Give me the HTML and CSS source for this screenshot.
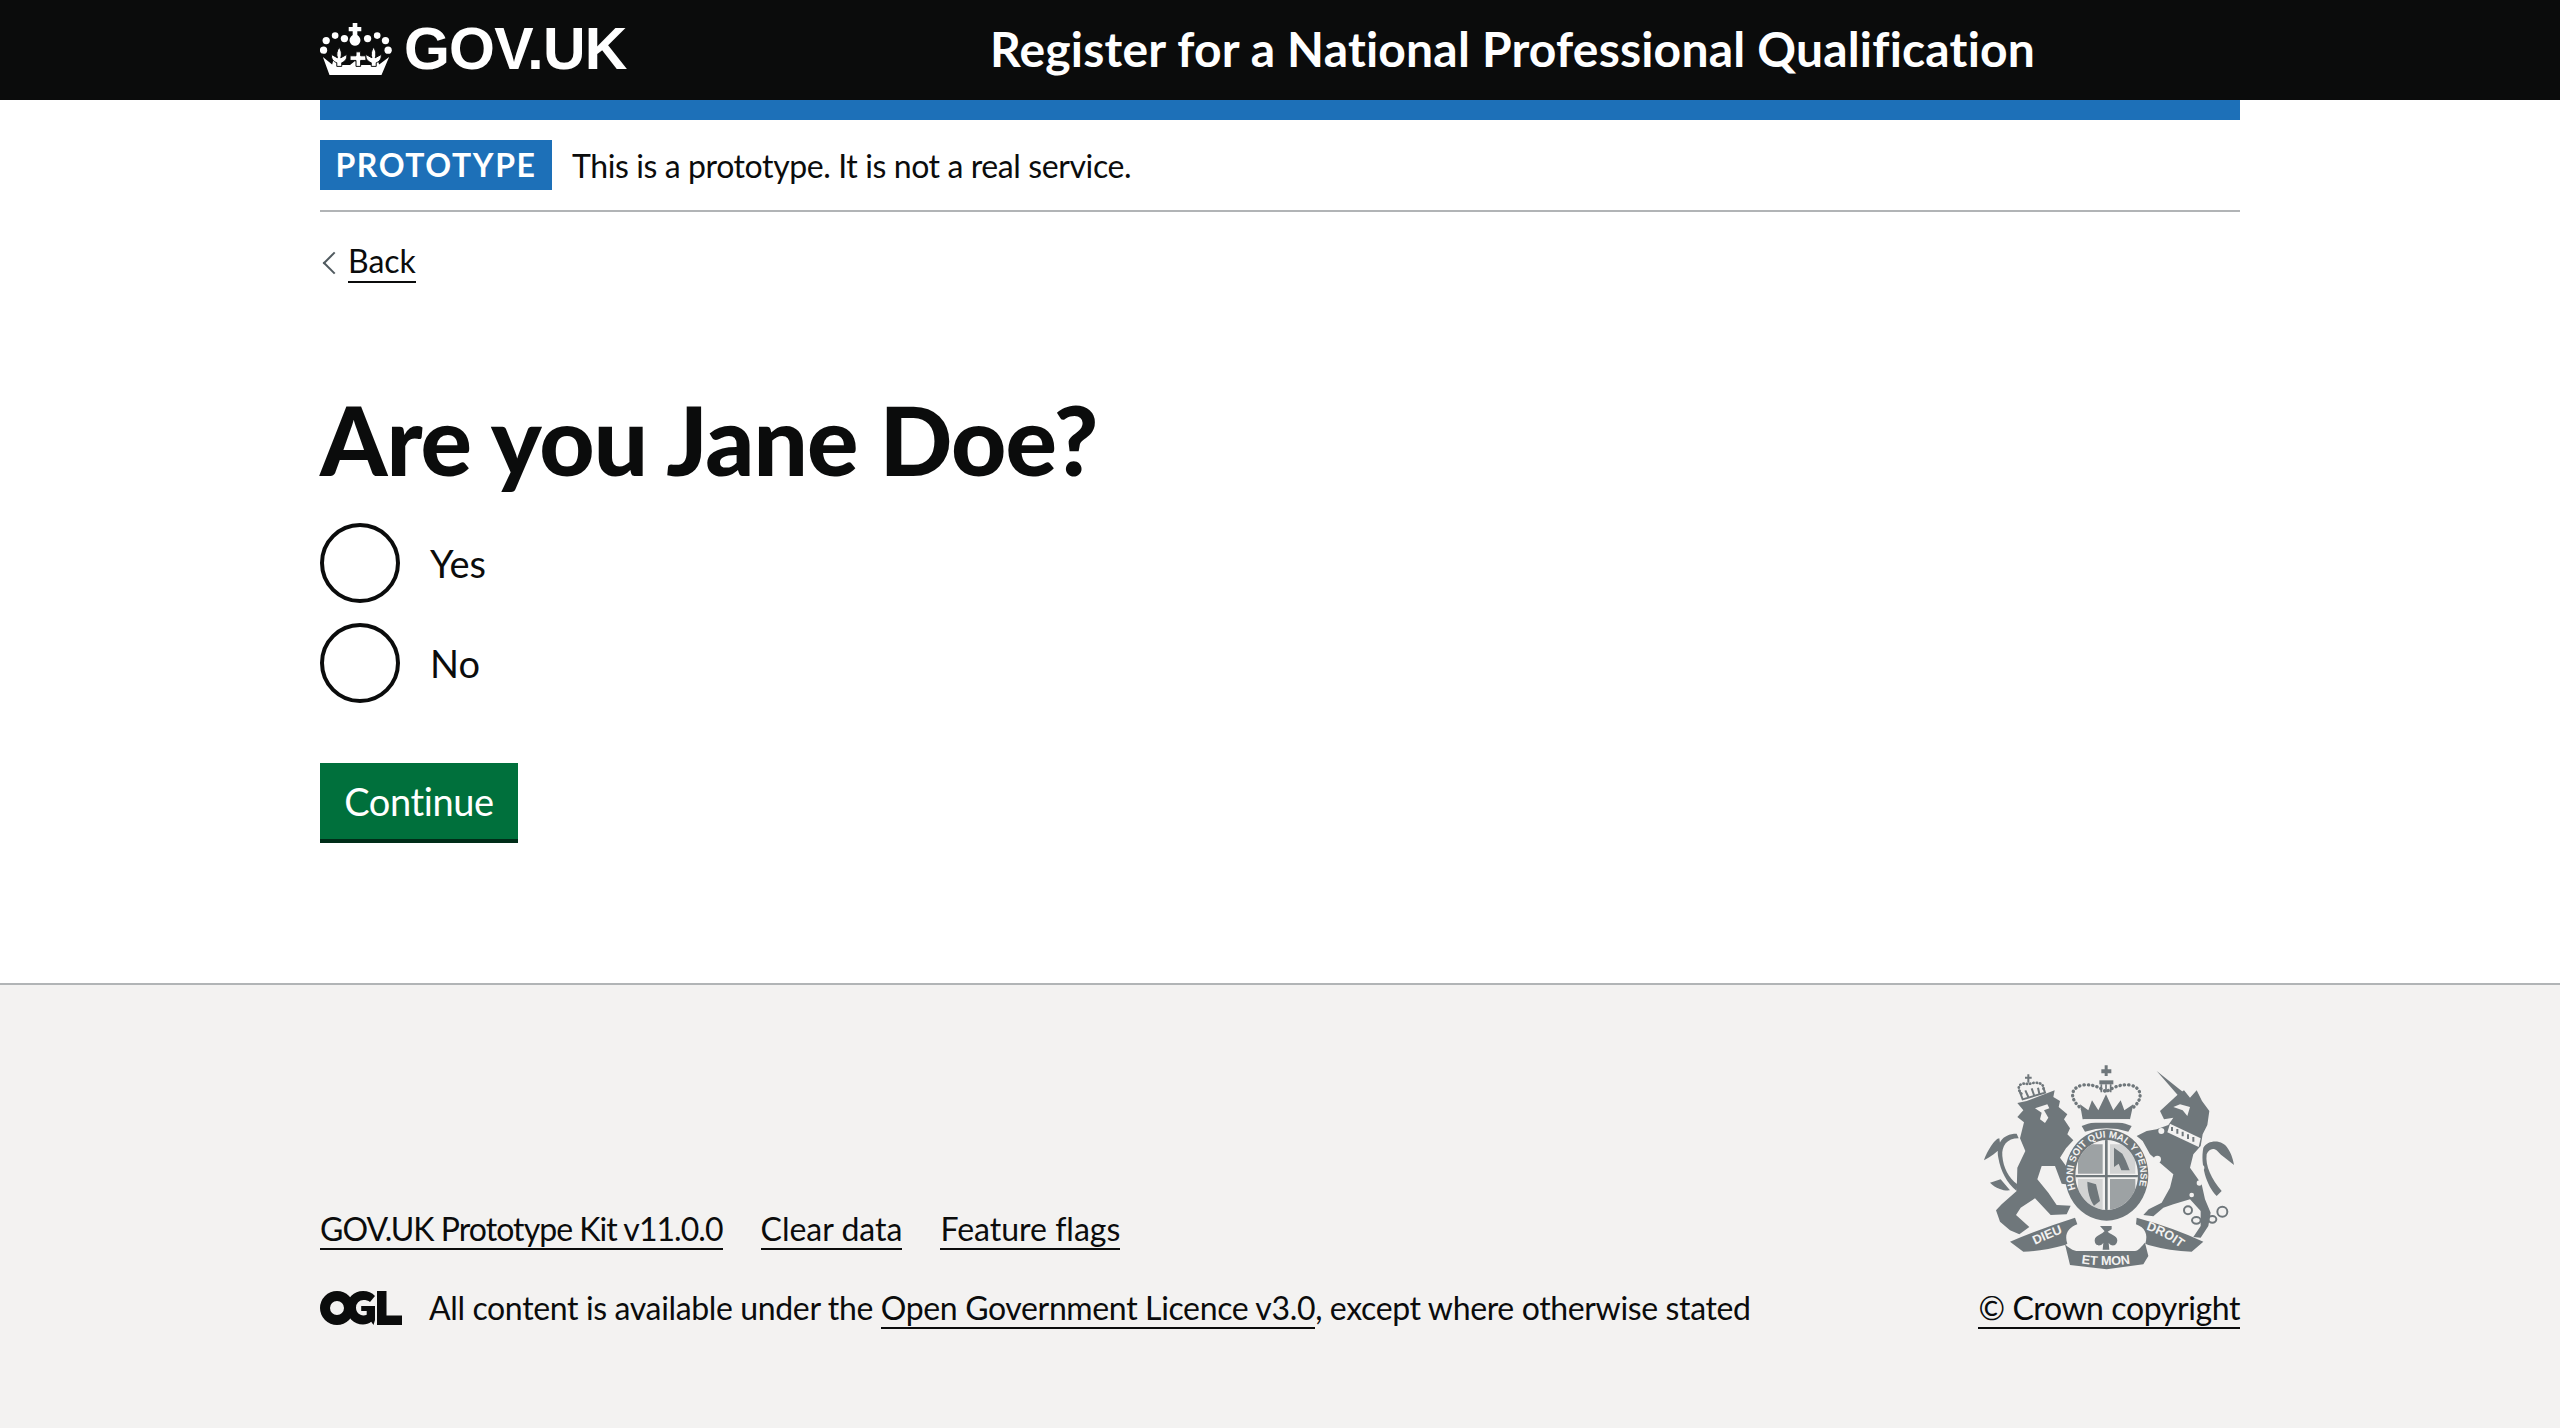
FILE: index.html
```html
<!DOCTYPE html>
<html lang="en">
<head>
    <meta charset="UTF-8">
    <title>Are you Jane Doe?</title>
    <link rel="stylesheet" href="styles.css">
</head>
<body>
    <header class="site-header">
        <div class="width-container header-inner">
            <a class="logo" href="#">
                <svg class="crown" viewBox="60 65 216 157" aria-hidden="true">
                    <g fill="#fff">
                        <path d="M158 65h14v12h12v13h-12v11c8 6 11 14 9 20-2 8-9 13-16 13s-14-5-16-13c-2-6 1-14 9-20V90h-12V77h12z"/>
                        <circle cx="105" cy="103" r="10"/><circle cx="133" cy="112" r="11"/>
                        <circle cx="78" cy="118" r="11"/><circle cx="203" cy="112" r="11"/>
                        <circle cx="232" cy="103" r="10"/><circle cx="257" cy="118" r="11"/>
                        <circle cx="70" cy="147" r="11"/><circle cx="265" cy="147" r="11"/>
                        <path d="M68 168L96 190 100 175 118 192H150L165 180 182 192H215L232 175 238 190 268 168 245 222H88Z"/>
                    </g>
                    <g fill="#fff" stroke="#0b0c0c" stroke-width="3">
                        <path id="fleur" d="M117 138C125 150 125 160 122 170L140 160C142 172 135 182 125 185L125 196H110V185C100 182 92 172 94 160L112 170C108 160 110 150 117 138Z"/>
                        <path d="M168 152h14v12h16v14h-16v18h-14v-18h-18v-14h18z"/>
                        <use href="#fleur" x="104"/>
                    </g>
                </svg>
                <span class="logo-text">GOV.UK</span>
            </a>
            <a class="service-name" href="#">Register for a National Professional Qualification</a>
        </div>
    </header>

    <div class="width-container">
        <div class="blue-bar"></div>

        <div class="phase-banner">
            <strong class="tag">PROTOTYPE</strong>
            <span>This is a prototype. It is not a real service.</span>
        </div>

        <a class="back-link" href="#"><span>Back</span></a>

        <main class="main">
            <h1>Are you Jane Doe?</h1>
            <div class="radios">
                <label class="radio"><span class="radio-mark"></span><span class="radio-label">Yes</span></label>
                <label class="radio"><span class="radio-mark"></span><span class="radio-label">No</span></label>
            </div>
            <button class="button">Continue</button>
        </main>
    </div>

    <footer class="footer">
        <div class="width-container footer-inner">
            <div class="footer-left">
                <ul class="footer-links">
                    <li><a class="kit-link" href="#">GOV.UK Prototype Kit v11.0.0</a></li>
                    <li><a href="#">Clear data</a></li>
                    <li><a href="#">Feature flags</a></li>
                </ul>
                <div class="licence">
                    <svg class="ogl" viewBox="0 0 82 34" aria-hidden="true">
                        <path fill="#0b0c0c" fill-rule="evenodd" d="M17 0A17 17 0 0 1 17 34A17 17 0 0 1 17 0ZM17 10A7 7 0 0 0 17 24A7 7 0 0 0 17 10Z"/>
                        <path fill="#0b0c0c" fill-rule="evenodd" d="M43 0c5 0 9 1.800 12 5l-5 6c-1.800-1.500-4-2-6.500-2A7.500 7.500 0 0 0 36 16.800c0 4.200 3.200 7.700 7.500 7.700 1.200 0 2.300-.3 3.200-.8V20h-5.500v-5H55v14l-1.500 5-2.300-3.200c-2.300 1.700-5 2.700-8.200 2.700-9 0-16.500-7.500-16.500-16.800S34 0 43 0z"/>
                        <path fill="#0b0c0c" d="M57 0h9.500v24.500H82V34H57z"/>
                    </svg>
                    <span>All content is available under the <a href="#">Open Government Licence v3.0</a>, except where otherwise stated</span>
                </div>
            </div>
            <div class="footer-right">
                <svg class="crest" viewBox="60 30 780 630" aria-hidden="true">
                    <defs>
                        <path id="garter" d="M395 472A101 112 0 1 1 495 466"/>
                        <path id="scroll-left" d="M200 594Q260 562 335 536"/>
                        <path id="scroll-mid" d="M345 634Q440 652 530 634"/>
                        <path id="scroll-right" d="M550 534Q610 550 668 596"/>
                        <clipPath id="shield-clip"><ellipse cx="440" cy="372" rx="94" ry="105"/></clipPath>
                    </defs>
                    <g fill="#6f777b">
                        <!-- lion -->
                        <path d="M172 156L200 150 284 118 280 138 300 150 296 168 322 190 312 205 330 232 322 250 340 268 318 292 300 320 338 372 336 402 305 398 285 345 245 345 232 385 265 425 290 462 332 464 320 490 272 492 225 442 182 470 168 492 208 528 178 550 150 538 120 512 108 478 125 460 170 420 172 350 196 300 180 262 192 214 172 198 190 178Z"/>
                        <!-- lion tail -->
                        <path d="M170 248C125 248 108 280 115 320 122 360 140 395 170 420L172 400C145 380 130 350 127 315 125 285 140 262 176 262ZM118 262C105 262 82 300 72 328 92 316 110 305 122 290ZM122 385L90 395C110 415 135 420 150 418Z"/>
                        <!-- unicorn -->
                        <path d="M590 60L668 122 655 134Z"/>
                        <path d="M600 180L622 160 652 132 672 118 690 140 710 118 726 150 748 180 742 222 728 250 722 285 700 310 690 350 725 400 735 445 752 485 745 525 722 560 700 558 722 525 722 480 690 445 640 460 610 470 580 496 550 492 566 475 605 455 630 410 640 370 605 340 570 310 548 270 530 255 560 240 590 235 625 222 640 200 612 205Z"/>
                        <!-- unicorn tail -->
                        <path d="M730 290C745 265 790 265 805 295 815 310 820 330 822 342 805 328 785 315 772 300 760 288 745 295 740 310 735 345 755 385 785 420L770 435C740 405 720 340 730 290Z"/>
                        <!-- main crown -->
                        <path d="M424 55h10V43h9v12h11v12h-11v8h-9v-8h-10z"/>
                        <path d="M418 88h42v12h-42z"/>
                        <path d="M360 160L385 178 396 148 415 178 438 130 460 178 482 148 493 178 520 160 510 205H368z"/>
                        <path d="M365 225Q440 195 515 225L505 242Q440 222 375 242Z"/>
                        <!-- garter -->
                        <path fill-rule="evenodd" d="M440 235A125 137 0 1 1 439.900 235ZM440 267A94 105 0 1 0 440.100 267Z"/>
                        <!-- scroll -->
                        <path d="M150 572Q250 530 345 500L352 520C325 530 312 550 322 578L315 582Q250 600 190 602Z"/>
                        <path d="M315 580C325 590 340 600 350 600H525C535 600 545 585 555 575L565 615 550 640 440 655 330 642Z"/>
                        <path d="M730 572Q640 530 530 500L528 520C555 530 565 550 556 578L565 582Q630 600 695 602Z"/>
                        <!-- fleur -->
                        <path d="M420 525H455V535L438 545ZM437 535C450 555 470 550 472 568 470 590 450 585 446 575L448 596H428L430 575C426 585 405 590 404 568 406 550 426 555 437 535Z"/>
                        <!-- chain -->
                        <path fill="none" stroke="#6f777b" stroke-width="6" d="M672 478a12 12 0 1 1 24 0 12 12 0 1 1-24 0M696 508a13 10 0 1 1 26 0 13 10 0 1 1-26 0M745 505a12 10 0 1 1 24 0 12 10 0 1 1-24 0M772 482a15 15 0 1 1 30 0 15 15 0 1 1-30 0"/>
                    </g>
                    <!-- crowns -->
                    <g fill="none" stroke="#6f777b">
                        <path stroke-width="10" stroke-dasharray="1 12" stroke-linecap="round" d="M368 175C330 150 325 110 370 102 405 98 425 115 438 122 452 115 475 98 510 102 550 110 550 150 512 175"/>
                        <path stroke-width="5" d="M424 100V124M438 100V124M452 100V124"/>
                        <path stroke-width="8" stroke-dasharray="1 9" stroke-linecap="round" d="M184 128C165 105 185 92 205 100 225 92 255 92 250 118"/>
                        <path stroke-width="6" d="M178 118L188 145 255 125 250 110M196 118L205 138M215 112L222 132M234 110L238 128"/>
                        <path stroke-width="6" d="M205 70V95M195 80H215"/>
                    </g>
                    <g fill="#f3f2f1">
                        <path d="M370 205h140l-4 10H376z"/>
                        <path d="M225 172L262 160 268 172 252 178 265 200 255 216 240 205 245 185Z"/>
                        <path d="M640 168L660 160 690 168 682 195 668 178Z"/>
                        <path d="M630 218L722 262 716 288 622 244Z"/>
                        <circle cx="604" cy="240" r="9"/><circle cx="592" cy="325" r="11"/><circle cx="725" cy="350" r="8"/>
                        <circle cx="718" cy="396" r="8"/><circle cx="695" cy="432" r="7"/>
                    </g>
                    <path fill="none" stroke="#6f777b" stroke-width="6" d="M636 228V240M652 234V248M668 242V256M684 250V264M700 258V272"/>
                    <g clip-path="url(#shield-clip)" fill="#6f777b">
                        <path opacity=".65" d="M354 280h74v88h-74z"/>
                        <path d="M450 280h76v88h-76z" opacity=".25"/>
                        <path d="M462 290l25 18 10 20 12 30h-25l-8-20-14 10z"/>
                        <path d="M354 384h74v90h-74z" opacity=".25"/>
                        <path d="M382 392l26 8 12 50-18 14c-12-16-20-44-20-72z"/>
                        <path d="M450 384h76v100h-76z" opacity=".65"/>
                        <path d="M435 260h8v230h-8zM340 372h200v7H340z"/>
                    </g>
                    <g class="crest-text">
                        <text font-size="29"><textPath href="#garter" startOffset="50%" text-anchor="middle">HONI SOIT QUI MAL Y PENSE</textPath></text>
                        <text font-size="38"><textPath href="#scroll-left" startOffset="50%" text-anchor="middle">DIEU</textPath></text>
                        <text font-size="38"><textPath href="#scroll-mid" startOffset="50%" text-anchor="middle">ET MON</textPath></text>
                        <text font-size="38"><textPath href="#scroll-right" startOffset="50%" text-anchor="middle">DROIT</textPath></text>
                    </g>
                </svg>
                <a class="copyright" href="#">© Crown copyright</a>
            </div>
        </div>
    </footer>
</body>
</html>
```

FILE: styles.css
```css
* { box-sizing: border-box; }
html, body { margin: 0; padding: 0; }
body { min-height: 1428px; display: flex; flex-direction: column; background: #fff; color: #0b0c0c; font-family: "Lato", "Liberation Sans", sans-serif; font-size: 38px; font-variant-ligatures: none; }
a { color: #0b0c0c; }
.width-container { width: 1920px; margin: 0 auto; }

.site-header { height: 100px; background: #0b0c0c; }
.header-inner { display: flex; align-items: center; height: 98px; }
.logo { display: flex; align-items: center; width: 670px; color: #fff; text-decoration: none; }
.crown { width: 72px; height: 52px; margin-right: 12px; }
.logo-text { font-family: "Liberation Sans", sans-serif; font-weight: bold; font-size: 59px; letter-spacing: -0.8px; }
.service-name { margin-top: -2px; color: #fff; text-decoration: none; font-weight: bold; font-size: 48px; letter-spacing: 0.2px; }

.blue-bar { height: 20px; background: #1d70b8; }

.phase-banner { display: flex; align-items: center; height: 92px; border-bottom: 2px solid #b1b4b6; font-size: 32px; letter-spacing: -0.4px; }
.tag { width: 232px; height: 50px; margin-right: 20px; background: #1d70b8; color: #fff; font-size: 32px; line-height: 50px; letter-spacing: 1.6px; text-align: center; }

.back-link { display: inline-block; position: relative; margin-top: 29px; padding-left: 28px; font-size: 32px; line-height: 40px; text-decoration: none; }
.back-link span { display: inline-block; border-bottom: 2px solid #0b0c0c; }
.back-link::before { content: ""; position: absolute; left: 6px; top: 14px; width: 14px; height: 14px; border-left: 2px solid #505a5f; border-bottom: 2px solid #505a5f; transform: rotate(45deg); }

.main { padding-top: 106px; }
h1 { margin: 0 0 34px; font-size: 96px; line-height: 100px; font-weight: 900; letter-spacing: -0.9px; }

.radios { display: flex; flex-direction: column; gap: 20px; margin-bottom: 60px; }
.radio { display: flex; align-items: center; height: 80px; }
.radio-mark { width: 80px; height: 80px; margin-right: 30px; border: 4px solid #0b0c0c; border-radius: 50%; }

.button { display: block; width: 198px; height: 80px; padding: 0 0 1px; border: 0; border-bottom: 4px solid #002d18; background: #00703c; color: #fff; font: inherit; letter-spacing: -0.4px; }

.footer { flex: 1; margin-top: 140px; background: #f3f2f1; border-top: 2px solid #b1b4b6; }
.footer-inner { display: flex; justify-content: space-between; align-items: flex-end; padding-top: 76px; }
.footer-left { margin-bottom: 2px; }
.footer-links { display: flex; gap: 38px; margin: 0 0 40px; padding: 0; list-style: none; font-size: 32px; }
.footer-links a, .licence a, .copyright { text-decoration: none; border-bottom: 2px solid #0b0c0c; }
.kit-link { letter-spacing: -0.95px; }
.licence { display: flex; align-items: center; font-size: 32px; letter-spacing: -0.36px; }
.ogl { width: 82px; height: 34px; margin-right: 27px; }
.footer-right { display: flex; flex-direction: column; align-items: flex-end; }
.crest { width: 260px; height: 210px; margin-bottom: 17px; }
.crest-text { fill: #f3f2f1; font-family: "Liberation Sans", sans-serif; font-weight: bold; }
.copyright { font-size: 32px; letter-spacing: -0.4px; }
```
